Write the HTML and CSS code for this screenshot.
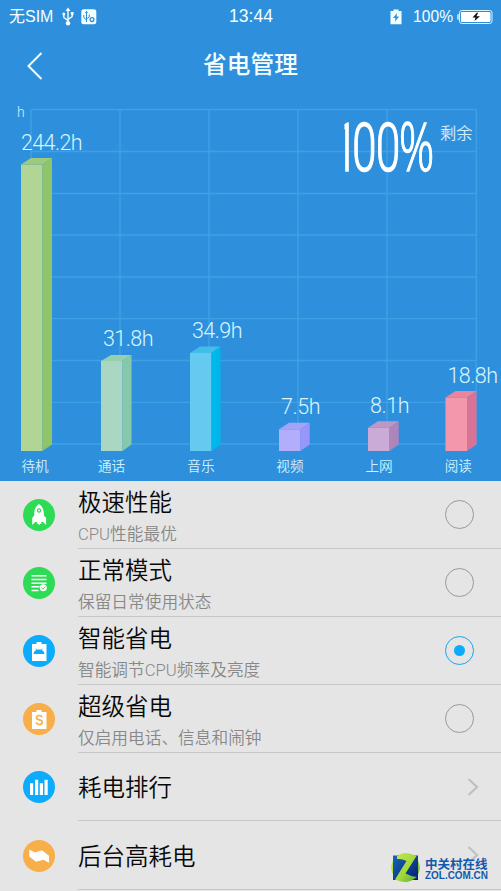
FILE: index.html
```html
<!DOCTYPE html>
<html lang="zh-CN">
<head>
<meta charset="utf-8">
<title>省电管理</title>
<link rel="stylesheet" href="styles.css">
</head>
<body>
<main class="screen">
  <section class="hero">
    <div class="status">
      <div class="status-left">
        <span>无SIM</span>
        <svg class="usb" width="12" height="19" viewBox="0 0 12 19" fill="none" stroke="#f4ffff" stroke-width="1.4"><path d="M6 3v13M1.800 7v3.200c0 1 4.200 2.300 4.200 4M10.200 6v3.200c0 1-4.200 2.300-4.200 4"/><path d="M3.500 4 6 .5 8.500 4z" fill="#f4ffff" stroke="none"/><circle cx="6" cy="16.300" r="2.200" fill="#f4ffff" stroke="none"/><circle cx="1.800" cy="7" r="1.500" fill="#f4ffff" stroke="none"/><path d="M8.800 5h2.800v2.800H8.800z" fill="#f4ffff" stroke="none"/></svg>
        <svg class="debug" width="16" height="16" viewBox="0 0 16 16"><rect x=".3" y=".3" width="15" height="15" rx="2.500" fill="#f4ffff"/><g fill="none" stroke="#2e8edb"><path d="M5.500 3v10M2.800 6v2.500L5.500 11M8.300 5.500V8L5.500 10"/><circle cx="11" cy="10.600" r="1.900" stroke-width="1.300"/></g><path d="M4 4 5.500 1.800 7 4z" fill="#2e8edb"/></svg>
      </div>
      <span class="time">13:44</span>
      <div class="status-right">
        <svg width="12" height="16" viewBox="0 0 12 16"><path d="M.5 2h3V.5h5V2h3v13.300H.5z" fill="#f4ffff"/><path d="M7 4 3 9h2.500L5 12.800 9 7.500H6.500z" fill="#2e8edb"/></svg>
        <span class="percent">100%</span>
        <svg class="battery" width="36" height="16" viewBox="0 0 36 16"><rect x="2.500" y="1.500" width="32.500" height="13" rx="2.300" fill="none" stroke="#d8f2ff" stroke-width="1"/><rect x="4" y="3" width="29.500" height="10" rx="1" fill="#fff"/><path d="M.3 6Q.3 5 1.600 5v6Q.3 11 .3 10z" fill="#eaffff"/><path d="M20 3.500 15.500 8.500h3L17.500 12 23 7.300h-3.500L21 4z" fill="#101010"/></svg>
      </div>
    </div>
    <header class="nav">
      <svg width="18" height="30" viewBox="0 0 18 30"><path d="M15.500 2 2.500 15l13 13" fill="none" stroke="#f4ffff" stroke-width="2"/></svg>
      <h1>省电管理</h1>
    </header>
    <svg class="chart" width="501" height="382" viewBox="0 98 501 382">
      <defs><clipPath id="stem"><path d="M344.500 110H438V185H344.500z"/></clipPath></defs>
      <path class="grid" d="M31 109.500H476.500M31 151.500H476.500M31 193.500H476.500M31 235H476.500M31 277H476.500M31 318.700H476.500M31 360.500H476.500M31 402.300H476.500M31 444H476.500M31 109.500V444M120 109.500V444M209 109.500V444M298 109.500V444M387 109.500V444M476.300 109.500V444"/>
      <text x="17" y="116.500" class="unit">h</text>
      <g>
        <path fill="#b0d594" d="M21 164.500H42.500V451H21z"/><path fill="#9dcb7b" d="M21 164.500 31 158H52L42.500 164.500z"/><path fill="#8fc566" d="M42.500 164.500 52 158V444.500L42.500 451z"/>
        <path fill="#a9d7c3" d="M101 361H122.500V451H101z"/><path fill="#96cfb0" d="M101 361 111 355H131.500L122.500 361z"/><path fill="#86c9aa" d="M122.500 361 131.500 355V444.500L122.500 451z"/>
        <path fill="#66c9ef" d="M190 353H211.500V451H190z"/><path fill="#40bde9" d="M190 353 200 346.500H220.500L211.500 353z"/><path fill="#00b7ec" d="M211.500 353 220.500 346.500V444.500L211.500 451z"/>
        <path fill="#b2aefc" d="M279 429.300H300.500V451H279z"/><path fill="#a5a3f8" d="M279 429.300 289 422.800H309.700L300.500 429.300z"/><path fill="#9896fb" d="M300.500 429.300 309.700 422.800V444.500L300.500 451z"/>
        <path fill="#caabd8" d="M368 427.700H389.500V451H368z"/><path fill="#bd98c5" d="M368 427.700 378 421.200H398.700L389.500 427.700z"/><path fill="#ae85b9" d="M389.500 427.700 398.700 421.200V444.500L389.500 451z"/>
        <path fill="#f397ad" d="M445.500 397.500H467V451H445.500z"/><path fill="#e9859c" d="M445.500 397.500 455.500 391H476.500L467 397.500z"/><path fill="#d97395" d="M467 397.500 476.500 391V444.500L467 451z"/>
      </g>
      <g class="value">
        <text x="21" y="149.500" textLength="61.500">244.2h</text>
        <text x="103" y="346" textLength="50.500">31.8h</text>
        <text x="192" y="338" textLength="50.500">34.9h</text>
        <text x="281" y="414" textLength="39.500">7.5h</text>
        <text x="370" y="412.500" textLength="39.500">8.1h</text>
        <text x="447.500" y="382.500" textLength="50.500">18.8h</text>
      </g>
      <g class="label">
        <text x="21.500" y="471">待机</text><text x="98" y="471">通话</text><text x="187.300" y="471">音乐</text>
        <text x="276.300" y="471">视频</text><text x="365.500" y="471">上网</text><text x="444.700" y="471">阅读</text>
      </g>
      <g clip-path="url(#stem)"><text class="big" transform="translate(334 171) scale(.66 1)" x="-.8 27.500 63.700">100<tspan class="sign" x="98.500">%</tspan></text></g>
      <text class="remain" x="440" y="138.500">剩余</text>
    </svg>
  </section>

  <section class="list">
    <div class="row">
      <svg class="icon" viewBox="0 0 32 32"><circle cx="16" cy="16" r="16" fill="#2edb55"/><path fill="#fff" d="M16 5c-3.500 2.500-4.800 6-4.800 9.500v2L9.200 19v7l3-3h2l-.4 2 1.700-.4.5 2 1.200-2 1.500.4-.6-2h2l3 3v-7l-2.200-2.500v-2C20.800 11 19.500 7.500 16 5z"/><circle cx="16" cy="11.500" r="1.600" fill="#fff" stroke="#2edb55" stroke-width="1.200"/></svg>
      <div class="body"><div class="copy"><h2>极速性能</h2><p>CPU性能最优</p></div><i class="radio"></i></div>
    </div>
    <div class="row">
      <svg class="icon" viewBox="0 0 32 32"><circle cx="16" cy="16" r="16" fill="#2edb55"/><path d="M8.500 8.700h15M8.500 12.500h15M8.500 16.200h15M8.500 19.800h8M8.500 23.500h7" fill="none" stroke="#fff" stroke-width="1.500"/><circle cx="20.300" cy="20.800" r="3.500" fill="#fff"/><path d="m18.500 20.800 1.400 1.300 2.400-2.500" fill="none" stroke="#2edb55" stroke-width="1"/></svg>
      <div class="body"><div class="copy"><h2>正常模式</h2><p>保留日常使用状态</p></div><i class="radio"></i></div>
    </div>
    <div class="row">
      <svg class="icon" viewBox="0 0 32 32"><circle cx="16" cy="16" r="16" fill="#0dabfb"/><path fill="#fff" d="M9 9h4.500V7h5v2h5v17H9z"/><path fill="#0dabfb" d="M10.500 19c.2-2 1.200-3.300 2.700-4l-.8-1.200.6-.3.900 1.200c1.400-.4 2.900-.4 4.200 0l.9-1.200.6.300-.8 1.200c1.500.7 2.500 2 2.700 4z"/></svg>
      <div class="body"><div class="copy"><h2>智能省电</h2><p>智能调节CPU频率及亮度</p></div><i class="radio selected"></i></div>
    </div>
    <div class="row">
      <svg class="icon" viewBox="0 0 32 32"><circle cx="16" cy="16" r="16" fill="#f8ae49"/><path fill="#fff" d="M9 9h4.500V7h5v2h5v17H9z"/><path d="M19 14.200c-.4-1.200-1.400-1.700-2.800-1.700-1.700 0-2.700.8-2.700 2.200 0 3.200 5.700 1.300 5.700 4.500 0 1.500-1.200 2.300-2.900 2.300s-2.700-.8-3-2.100" fill="none" stroke="#f8ae49" stroke-width="1.700"/></svg>
      <div class="body"><div class="copy"><h2>超级省电</h2><p>仅启用电话、信息和闹钟</p></div><i class="radio"></i></div>
    </div>
    <div class="row">
      <svg class="icon" viewBox="0 0 32 32"><circle cx="16" cy="16" r="16" fill="#0dabfb"/><path fill="#fff" d="M7 12.300h3.200V24H7zM12 8.800h3.200V24H12zM16.800 12.300H20V24h-3.200zM21.500 8.800h3.200V24h-3.200z"/></svg>
      <div class="body single"><h2>耗电排行</h2><svg class="arrow" viewBox="0 0 12 18"><path d="m1.500 1 8.500 8-8.500 8"/></svg></div>
    </div>
    <div class="row">
      <svg class="icon" viewBox="0 0 32 32"><circle cx="16" cy="16" r="16" fill="#f8ae49"/><path fill="#fff" d="m6.300 9.500 5.500 3 7.200-2.300 7 5.500v7l-5.500-3-7.500 2-6.700-5.200z"/></svg>
      <div class="body single"><h2>后台高耗电</h2><svg class="arrow" viewBox="0 0 12 18"><path d="m1.500 1 8.500 8-8.500 8"/></svg></div>
    </div>
  </section>

  <svg class="watermark" width="101" height="34" viewBox="0 0 101 34">
    <defs>
      <linearGradient id="leaf" x2="1" y2="1"><stop stop-color="#c4e84b"/><stop offset=".55" stop-color="#a3d83c"/><stop offset="1" stop-color="#58aa35"/></linearGradient>
      <linearGradient id="navy" x2="1" y2="1"><stop stop-color="#1767b5"/><stop offset="1" stop-color="#071d70"/></linearGradient>
    </defs>
    <circle cx="15.500" cy="16.500" r="14.300" fill="url(#leaf)"/>
    <path fill="url(#navy)" d="M3 4.500H28V29H3z"/>
    <path fill="url(#leaf)" d="M7 5Q16-.5 26.500 5L15.500 22.500Q21 25.500 27 26 17 34 5 28.500L16.500 10Q12 7.500 7 8z"/>
    <text class="wm-cn" x="35" y="17.500" textLength="62.500" lengthAdjust="spacingAndGlyphs">中关村在线</text>
    <text class="wm-en" x="35" y="28.300" textLength="63" lengthAdjust="spacingAndGlyphs">ZOL.COM.CN</text>
  </svg>
</main>
</body>
</html>
```
FILE: styles.css
```css
* { box-sizing: border-box; }

body {
  margin: 0;
  background: #e5e5e5;
  font-family: Roboto, "Noto Sans CJK SC", sans-serif;
}

h1, h2, p { margin: 0; }
svg { display: block; flex: none; }

.screen {
  position: relative;
  width: 501px;
  height: 891px;
  overflow: hidden;
  background: #e5e5e5;
}

.hero {
  height: 480.500px;
  background: #2e90dd;
  color: #f4ffff;
}

.status {
  display: grid;
  grid-template-columns: 1fr auto 1fr;
  align-items: center;
  height: 33px;
  padding: 0 8px 0 9px;
  font-family: "Liberation Sans", "Noto Sans CJK SC", sans-serif;
  line-height: 33px;
}

.status-left, .status-right { display: flex; align-items: center; height: 33px; }
.status-left { font-size: 16px; }
.status-right { justify-content: flex-end; }
.usb { margin-left: 9px; }
.debug { margin-left: 7px; }
.time { font-size: 17.500px; }
.percent { margin-left: 11px; font-size: 15.600px; }
.battery { margin-left: 4px; }

.nav {
  display: grid;
  grid-template-columns: 18px 1fr 18px;
  align-items: center;
  height: 65px;
  padding: 0 26px;
}

.nav h1 {
  font-size: 23.700px;
  font-weight: 500;
  line-height: 65px;
  text-align: center;
}

.chart { font-family: Roboto, "Noto Sans CJK SC", sans-serif; }
.grid { fill: none; stroke: #41a0e5; stroke-width: 1.300; }
.unit { fill: #c8f1ff; font-size: 14px; font-weight: 300; }
.value { fill: #d8f6ff; font-size: 21.500px; font-weight: 300; }
.label { fill: #d0f2ff; font-size: 13.600px; font-weight: 350; }
.big {
  fill: #fff;
  stroke: #fff;
  stroke-width: 1.400px;
  font-size: 66px;
  font-weight: 300;
}
.sign { font-family: "Open Sans", sans-serif; }
.remain { fill: #d0f2ff; font-size: 16.300px; font-weight: 350; }

.row {
  display: grid;
  grid-template-columns: 32px 1fr;
  column-gap: 23px;
  align-items: center;
  height: 68.200px;
  padding-left: 23px;
}

.icon { width: 32px; height: 32px; }

.body {
  display: flex;
  align-items: center;
  justify-content: space-between;
  height: 68.200px;
  padding-right: 28px;
  border-bottom: 1px solid #c7c7c7;
}

.body.single { padding-right: 22px; }
.body.single h2 { padding-top: 3px; }

.row h2 {
  color: #080808;
  font-size: 23.500px;
  font-weight: 350;
  line-height: 34px;
}

.row p {
  color: #888;
  font-size: 16.700px;
  font-weight: 350;
  line-height: 30px;
}

.copy { padding-top: 7px; }

.radio {
  display: grid;
  place-items: center;
  width: 29px;
  height: 29px;
  margin-right: -1px;
  border: 1.500px solid #999;
  border-radius: 50%;
}

.radio.selected { border-color: #1ba5eb; }

.radio.selected::after {
  content: "";
  width: 11px;
  height: 11px;
  border-radius: 50%;
  background: #0dabfb;
}

.arrow {
  width: 12px;
  height: 18px;
  fill: none;
  stroke: #c1c1c1;
  stroke-width: 2.300;
}

.watermark { position: absolute; left: 390px; top: 851px; }
.wm-cn { fill: #1358ad; font: 700 12.500px "Noto Sans CJK SC", sans-serif; }
.wm-en { fill: #1358ad; font: 700 10.500px "Liberation Sans", sans-serif; }
```
